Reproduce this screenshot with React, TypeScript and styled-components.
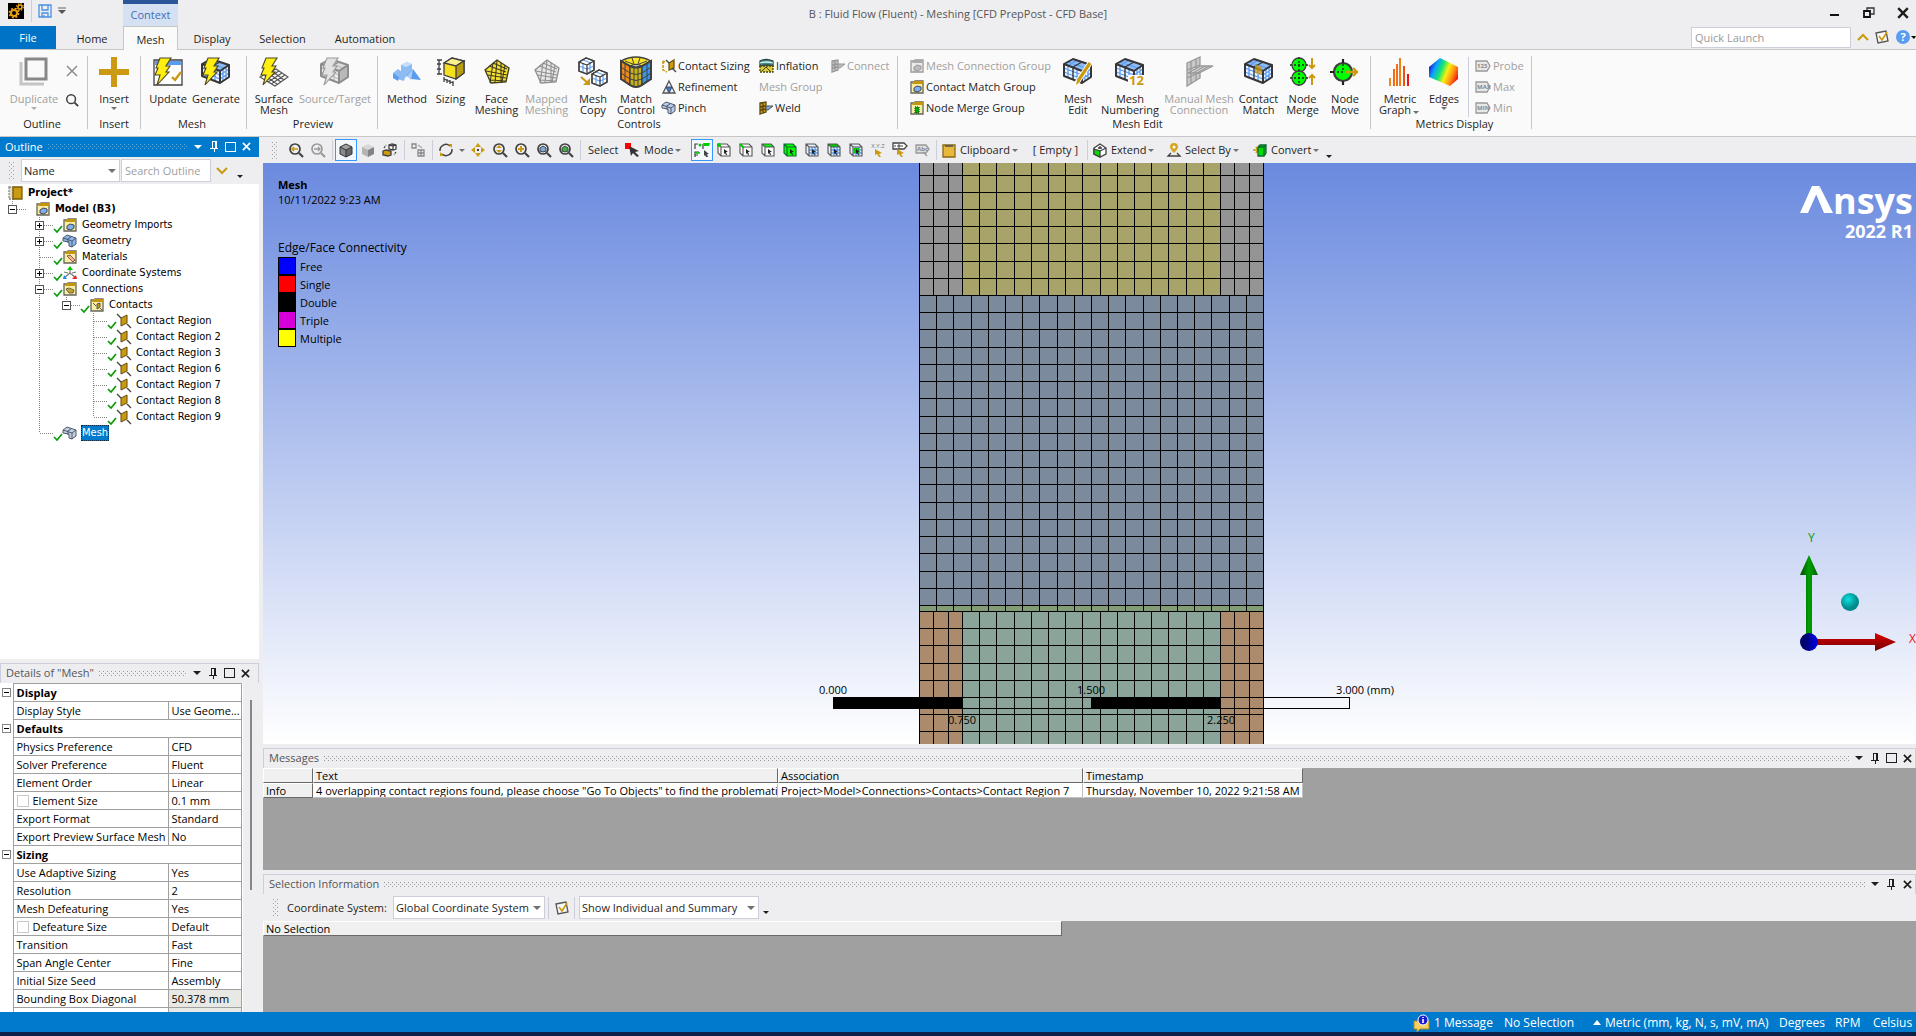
import React from 'react';
import styled, { createGlobalStyle, css } from 'styled-components';

/* ---------- theme values ---------- */
const UI = `"Open Sans", "Noto Sans", sans-serif`;
const TREE = `"DejaVu Sans Condensed", "DejaVu Sans", sans-serif`;
const BLUE = '#007acc';
const CHROME = '#eeeef0';
const GOLD = '#cc9a10';
const INK = '#404040';

const dots = (color: string) =>
  `url("data:image/svg+xml,%3Csvg xmlns='http://www.w3.org/2000/svg' width='4' height='4' shape-rendering='crispEdges'%3E%3Cpath fill='%23${color}' d='M0 0h1v1h-1zM2 2h1v1h-1z'/%3E%3C/svg%3E")`;
const arrow =
  `url("data:image/svg+xml,%3Csvg xmlns='http://www.w3.org/2000/svg' width='8' height='4'%3E%3Cpath fill='%23707070' d='M0 0h8l-4 4z'/%3E%3C/svg%3E")`;

const Global = createGlobalStyle`
  * { box-sizing: border-box; }
  body { margin: 0; background: ${CHROME}; overflow: hidden; }
  button, input, select { font: inherit; color: inherit; margin: 0; padding: 0; border: 0; background: none; }
  svg { display: block; flex: none; overflow: visible; }
`;

/* ---------- shell ---------- */
const Page = styled.div`
  height: 100vh;
  display: flex;
  flex-direction: column;
  background: ${CHROME};
  color: #1e1e1e;
  font: 11px/14px ${UI};
`;
const TitleBar = styled.header`
  height: 26px;
  display: grid;
  grid-template-columns: 1fr auto 1fr;
  align-items: stretch;
  flex: none;
`;
const TitleLeft = styled.div`
  display: flex;
  align-items: flex-start;
`;
const QuickAccess = styled.div`
  display: flex;
  align-items: center;
  width: 123px;
  height: 22px;
  padding-left: 8px;
`;
const PlainButton = styled.button`
  display: flex;
  align-items: center;
  justify-content: center;
`;
const QuickRule = styled.span`
  width: 1px;
  height: 22px;
  margin: 0 6px 0 7px;
  background: #cccedb;
`;
const ContextTab = styled.div`
  width: 55px;
  height: 26px;
  padding-top: 4px;
  border-top: 4px solid #2b579a;
  background: #d5e1f2;
  color: #3f6db5;
  text-align: center;
`;
const WindowTitle = styled.h1`
  margin: 0;
  padding-top: 6px;
  color: #555;
  font: 11px/15px ${UI};
`;
const WindowButtons = styled.div`
  display: flex;
  justify-content: flex-end;
  align-items: center;
  gap: 22px;
  padding-right: 7px;
`;
const TabRow = styled.nav`
  height: 24px;
  display: flex;
  flex: none;
  border-bottom: 1px solid #c6c6c6;
`;
const Tab = styled.button<{ $w: number; $kind?: 'file' | 'on' }>`
  width: ${(p) => p.$w}px;
  height: 23px;
  padding-top: 2px;
  text-align: center;
  ${(p) => p.$kind === 'file' && css`background: #0173c7; color: #fff; margin-right: 5px; padding-top: 0;`}
  ${(p) =>
    p.$kind === 'on' &&
    css`height: 24px; background: #fafafa; border: 1px solid #c6c6c6; border-bottom: 0;`}
`;
const Launch = styled.div`
  margin-left: auto;
  display: flex;
  align-items: center;
  gap: 7px;
  padding: 0 0 1px;
`;
const LaunchInput = styled.input`
  width: 160px;
  height: 21px;
  padding: 0 3px;
  border: 1px solid #cccedb;
  background: #fff;
  &::placeholder { color: #999; opacity: 1; }
`;
const HelpButton = styled(PlainButton)`
  gap: 1px;
`;

/* ---------- ribbon ---------- */
const Ribbon = styled.section`
  height: 87px;
  display: flex;
  flex: none;
  padding-top: 6px;
  background: #fafafa;
  border-bottom: 1px solid #c6c6c6;
`;
const Group = styled.div<{ $pl: number; $pr: number }>`
  height: 73px;
  display: flex;
  flex-direction: column;
  padding: 0 ${(p) => p.$pr}px 0 ${(p) => p.$pl}px;
  border-right: 1px solid #c6c6c6;
  line-height: 13px;
  text-align: center;
`;
const GroupBody = styled.div`
  height: 61px;
  flex: none;
  padding-top: 1px;
  display: flex;
`;
const Big = styled.button<{ $w: number }>`
  width: ${(p) => p.$w}px;
  display: flex;
  flex-direction: column;
  align-items: center;
  line-height: 11px;
  &:disabled { color: #a0a0a0; }
  svg { margin-bottom: 6px; }
  svg + span { white-space: pre; }
`;
const CaretDown = styled.i<{ $c?: string; $m?: number }>`
  display: inline-block;
  border: 3px solid transparent;
  border-top-color: ${(p) => p.$c || '#707070'};
  border-bottom: 0;
  margin: ${(p) => p.$m || 0}px 2px 0;
`;
const SmallCol = styled.div<{ $w: number; $pad?: number }>`
  width: ${(p) => p.$w}px;
  padding-left: ${(p) => p.$pad || 0}px;
  display: flex;
  flex-direction: column;
`;
const Small = styled.button`
  height: 21px;
  flex: none;
  display: flex;
  align-items: center;
  gap: 2px;
  white-space: nowrap;
  padding-bottom: 4px;
  &:disabled { color: #a0a0a0; }
`;
const SideTools = styled.div`
  width: 16px;
  display: flex;
  flex-direction: column;
  align-items: center;
  gap: 16px;
  padding-top: 8px;
`;
const InnerRule = styled.span`
  width: 1px;
  margin: 0 6px 0 2px;
  background: #cccedb;
`;

/* ---------- docked panels ---------- */
const Main = styled.main`
  flex: 1;
  min-height: 0;
  display: flex;
  gap: 4px;
`;
const Left = styled.aside`
  width: 259px;
  flex: none;
  display: flex;
  flex-direction: column;
  gap: 4px;
`;
const Right = styled.section`
  flex: 1;
  min-width: 0;
  display: flex;
  flex-direction: column;
`;
const Panel = styled.section<{ $h?: number }>`
  ${(p) => (p.$h ? css`height: ${p.$h}px; flex: none;` : css`flex: 1; min-height: 0;`)}
  display: flex;
  flex-direction: column;
  overflow: hidden;
`;
const Head = styled.header<{ $active?: boolean; $pr: number }>`
  height: 20px;
  flex: none;
  display: flex;
  align-items: center;
  padding: 0 ${(p) => p.$pr}px 1px 5px;
  color: ${(p) => (p.$active ? '#fff' : '#555')};
  background: ${(p) => (p.$active ? BLUE : CHROME)};
  border: ${(p) => (p.$active ? '0' : '1px solid #cccedb')};
  border-bottom: 0;
`;
const HeadTitle = styled.h2`
  margin: 0;
  font: 11px/16px ${UI};
`;
const HeadDots = styled.span<{ $active?: boolean }>`
  flex: 1;
  height: 5px;
  margin: 0 3px 0 5px;
  background: ${(p) => dots(p.$active ? '66aee0' : '999999')};
`;
const HeadButtons = styled.div<{ $dark?: boolean }>`
  display: flex;
  align-items: center;
  gap: 2px;
  color: ${(p) => (p.$dark ? '#1e1e1e' : '#fff')};
  button { width: 14px; height: 14px; }
`;
const Bar = styled.div<{ $h: number }>`
  height: ${(p) => p.$h}px;
  flex: none;
  display: flex;
  align-items: center;
`;
const Grip = styled.span`
  width: 5px;
  height: 17px;
  margin: 0 8px 0 9px;
  background: ${dots('a0a0a8')};
`;
const Field = styled.input`
  width: 90px;
  height: 23px;
  padding: 0 3px;
  border: 1px solid #cccedb;
  background: #fff;
  &::placeholder { color: #a0a0a0; opacity: 1; }
`;
const Drop = styled.select<{ $w: number }>`
  appearance: none;
  width: ${(p) => p.$w}px;
  height: 23px;
  padding: 0 14px 0 2px;
  border: 1px solid #cccedb;
  background: #fff ${arrow} no-repeat right 3px center;
  overflow: hidden;
`;
const Overflow = styled.button`
  align-self: flex-end;
  padding: 0 0 5px 2px;
  line-height: 4px;
`;
const OutlineBar = styled(Bar)`
  gap: 1px;
  padding-left: 1px;
  ${Grip} { margin: 0 6px 0 8px; }
  ${Overflow} { padding: 0 0 6px; }
`;

/* ---------- tree ---------- */
const Tree = styled.div`
  flex: 1;
  padding-top: 1px;
  background: #fff;
  font: 11px/16px ${TREE};
  color: #000;
`;
const Node = styled.div<{ $bold?: boolean }>`
  height: 16px;
  display: flex;
  align-items: center;
  font-weight: ${(p) => (p.$bold ? 700 : 400)};
`;
const CheckSlot = styled.span`
  width: 9px;
  padding-top: 7px;
`;
const NodeText = styled.span<{ $sel?: boolean }>`
  margin-left: 4px;
  padding: 0 1px;
  line-height: 16px;
  ${(p) => p.$sel && css`background: ${BLUE}; color: #fff; outline: 1px dotted #0a2a50; outline-offset: -1px;`}
`;

/* ---------- details ---------- */
const DetailsBody = styled.div`
  flex: 1;
  min-height: 0;
  display: flex;
  overflow: hidden;
`;
const Scroll = styled.div`
  flex: 1;
  padding-top: 17px;
  display: flex;
  align-items: flex-start;
  &::after { content: ''; width: 2px; height: 190px; margin-left: 7px; background: #868686; }
`;
const DetailsTable = styled.table`
  width: 243px;
  flex: none;
  align-self: flex-start;
  table-layout: fixed;
  border-collapse: collapse;
  background: #fff;
  color: #000;
  tr { height: 18px; }
  td, th {
    height: 18px;
    padding: 0 0 1px 3px;
    border: 1px solid #a0a0a0;
    line-height: 15px;
    text-align: left;
    white-space: nowrap;
    overflow: hidden;
    text-overflow: ellipsis;
  }
  td:first-child { border-width: 0; padding: 0 0 0 2px; }
`;
const Value = styled.td<{ $ro?: boolean }>`
  background: ${(p) => (p.$ro ? '#e8e8e4' : '#fff')};
`;
const Toggle = styled.button`
  width: 9px;
  height: 9px;
  display: block;
  border: 1px solid #848484;
  background: #fff linear-gradient(#000, #000) no-repeat center / 5px 1px;
`;
const Tick = styled.input`
  appearance: none;
  width: 12px;
  height: 12px;
  margin: 0 4px 0 0;
  border: 1px solid #c8c8c8;
  background: #fff;
  vertical-align: -2px;
`;

/* ---------- graphics toolbar ---------- */
const Tool = styled.button<{ $on?: boolean }>`
  width: 22px;
  height: 22px;
  flex: none;
  display: flex;
  align-items: center;
  justify-content: center;
  ${(p) => p.$on && css`border: 1px solid #3399ff; background: #f4f8fd;`}
`;
const ToolRule = styled.span`
  width: 1px;
  height: 20px;
  flex: none;
  margin: 0 2px 0 3px;
  background: #cccedb;
`;
const TextTool = styled.button<{ $w: number }>`
  width: ${(p) => p.$w}px;
  height: 22px;
  flex: none;
  display: flex;
  align-items: center;
  white-space: nowrap;
  svg { margin: 0 4px 0 3px; }
`;
const ToolLabel = styled.span`
  width: 39px;
  padding-left: 5px;
`;

/* ---------- viewport ---------- */
const Viewport = styled.div`
  flex: 1;
  min-height: 0;
  position: relative;
  overflow: hidden;
  background: linear-gradient(#6a8adf, #fff);
  color: #000;
`;
const Scene = styled.svg`
  position: absolute;
  inset: 0;
  width: 100%;
  height: 100%;
`;
const Legend = styled.div`
  position: absolute;
  left: 15px;
  top: 14px;
  line-height: 15px;
`;
const LegendTitle = styled.div`
  margin: 33px 0 2px;
  font-size: 12px;
`;
const LegendRow = styled.div<{ $c: string }>`
  height: 18px;
  display: flex;
  align-items: center;
  gap: 4px;
  &::before { content: ''; width: 16px; height: 16px; border: 1px solid #000; background: ${(p) => p.$c}; }
`;
const Brand = styled.div`
  position: absolute;
  right: 3px;
  top: 20px;
  color: #fff;
  text-align: right;
`;
const BrandName = styled.div`
  display: flex;
  align-items: flex-start;
  font: 700 36px/36px ${UI};
  svg { margin: 3px 0 0; }
`;
const BrandRelease = styled.div`
  font: 700 18px/24px ${UI};
`;
const Triad = styled.svg`
  position: absolute;
  right: 0;
  bottom: 79px;
`;

/* ---------- bottom tables ---------- */
const Grey = styled.div`
  flex: 1;
  background: #a0a0a0;
`;
const GridArea = styled.div`
  flex: none;
  display: flex;
  background: #a0a0a0;
`;
const Grid = styled.table<{ $w: number }>`
  width: ${(p) => p.$w}px;
  flex: none;
  table-layout: fixed;
  border-collapse: separate;
  border-spacing: 0;
  color: #000;
  td, th {
    height: 15px;
    padding: 0 2px;
    border: 1px solid;
    border-color: #fff #696969 #696969 #fff;
    background: #f0f0f0;
    font-weight: 400;
    line-height: 13px;
    text-align: left;
    white-space: nowrap;
    overflow: hidden;
  }
  td { background: #fff; border-color: #fff #c0c0c0 #c0c0c0 #fff; }
`;
const SelBar = styled(Bar)`
  ${Grip} { margin: 0 9px 0 10px; }
  label { width: 106px; }
  ${Overflow} { padding-bottom: 7px; }
`;
const SelTool = styled(PlainButton)`
  width: 27px;
  height: 22px;
  border: solid #cccedb;
  border-width: 0 1px;
  margin: 0 4px 0 3px;
`;

/* ---------- status ---------- */
const Status = styled.footer`
  height: 20px;
  flex: none;
  display: flex;
  align-items: center;
  justify-content: flex-end;
  gap: 10px;
  padding: 1px 4px 0 0;
  background: ${BLUE};
  color: #fff;
  font-size: 12px;
`;
const StatusItem = styled.button<{ $w: number }>`
  width: ${(p) => p.$w}px;
  display: flex;
  align-items: center;
  gap: 4px;
  white-space: nowrap;
`;
const TaskEdge = styled.div`
  height: 4px;
  flex: none;
  background: #0c2148;
`;

/* ---------- drawings ---------- */
type K = { children?: React.ReactNode; w?: number; h?: number; vb?: string };
const Ico = ({ children, w = 16, h = 16, vb }: K) => (
  <svg width={w} height={h} viewBox={vb || `0 0 ${w} ${h}`} fill="none" stroke={INK} strokeWidth="1.3" aria-hidden="true">
    {children}
  </svg>
);
const Bolt = ({ grey }: { grey?: boolean }) => (
  <path d="M7 1h11l-5 8h4l-4 6h3L4 28l3-10H2l3-7H3z" fill={grey ? '#e2e2e2' : '#ffee10'} stroke={grey ? '#9a9a9a' : '#4a4628'} strokeWidth="1.1" />
);
const BoxMesh = ({ grey }: { grey?: boolean }) => {
  const s = grey ? '#8c8c8c' : '#35353a';
  const b = grey ? '#b8b8b8' : '#5a9cf0';
  return (
    <g strokeLinejoin="round">
      <path d="M1 7l9-5 18 6v12l-9 6L1 19z" fill={grey ? '#eee' : '#eef5ff'} stroke="none" />
      <path d="M1 7l9-5 18 6-9 6z" fill={grey ? '#ddd' : '#8dbcf5'} stroke="none" />
      {grey && <path d="M19 14l9-6v12l-9 6z" fill="#bbb" stroke="none" />}
      <path d="M1 11l18 7 9-6M1 15l18 7 9-6M5 9v11M14 12v11M22 12v12M25 10v12M5 5l18 6M14 3l-9 6" stroke={b} strokeWidth="1.3" />
      <path d="M10 10v12" stroke={s} strokeWidth="1.4" />
      <path d="M10 10l9-5" stroke={s} strokeWidth="1.4" />
      <path d="M1 7l9-5 18 6v12l-9 6L1 19zM1 7l18 7 9-6M19 14v12" stroke={s} strokeWidth="2" />
    </g>
  );
};
const Pent = ({ grey }: { grey?: boolean }) => {
  const s = grey ? '#8f8f8f' : '#3f3c20';
  return (
    <Ico w={30} h={30}>
      <path d="M15 3l12 8-3 14-15 1L3 13z" fill={grey ? '#e6e6e6' : '#f5e132'} stroke={s} />
      <path d="M11 6l-3 20M15 3l-2 23M19 6v20M23 8l-3 17M7 9l17 6M4 14l21 4M6 18l18 3M8 23l16 1M11 6l14 6" stroke={s} strokeWidth="1.1" />
    </Ico>
  );
};
const SmallCube = ({ x, y }: { x: number; y: number }) => (
  <g transform={`translate(${x} ${y})`}>
    <path d="M0 4l7-4 8 3v9l-7 4-8-3z" fill="#fff" />
    <path d="M0 8l8 3 7-3M4 5v9M11 5v9M4 2l8 3" stroke="#6aa6f0" />
    <path d="M0 4l7-4 8 3v9l-7 4-8-3zM0 4l8 3 7-4M8 7v9" />
  </g>
);
const Duplicate = () => (
  <Ico w={30} h={30}>
    <path d="M2 5v22h23" stroke="#c4c4c4" strokeWidth="3" />
    <path d="M7 2h20v20H7z" fill="#fafafa" stroke="#888" strokeWidth="3" />
  </Ico>
);
const Plus = () => (
  <Ico w={30} h={30}><path d="M15 0v30M0 15h30" stroke={GOLD} strokeWidth="6" /></Ico>
);
const Update = () => (
  <Ico w={30} h={30}>
    <path d="M1 3h28v25H1z" fill="#fff" stroke="#404040" />
    <path d="M2 4h26v4H2z" fill="#5a9cf0" stroke="none" />
    <path d="M19 20l3 3 6-8" stroke={GOLD} strokeWidth="2.4" />
    <Bolt />
  </Ico>
);
const Generate = ({ grey }: { grey?: boolean }) => (
  <Ico w={30} h={30}><BoxMesh grey={grey} /><Bolt grey={grey} /></Ico>
);
const SurfaceMesh = () => (
  <Ico w={30} h={30}>
    <path d="M1 20l16-8 12 8-13 9zM5 23l15-9M9 25l14-9M12 27l14-9M5 18l13 9M9 16l13 9M13 14l12 9" stroke="#555" strokeWidth="1.1" />
    <Bolt />
  </Ico>
);
const Method = () => (
  <Ico w={30} h={30}>
    <path d="M1 16l5-4 8 6-2 6-11-3z" fill="#8dbcf5" stroke="none" /><path d="M1 16l6 4-1 4-5-3z" fill="#5a9cf0" stroke="none" />
    <path d="M9 8l6-3 5 2v10l-6 3-5-3z" fill="#8dbcf5" stroke="none" /><path d="M9 8l6-3 5 2-6 3z" fill="#c6dffb" stroke="none" />
    <path d="M21 12l8 11-10-1-4-4z" fill="#5a9cf0" stroke="none" /><path d="M21 12l-6 7 4 4z" fill="#a9cdf8" stroke="none" />
  </Ico>
);
const Sizing = () => (
  <Ico w={30} h={30}>
    <path d="M8 6l8-5 12 3v12l-8 6-12-4z" fill="#f5df20" />
    <path d="M8 6l8-5 12 3-8 5z" fill="#fbf090" /><path d="M20 9l8-5v12l-8 6z" fill="#b89d10" />
    <path d="M3 3v14M1 3h5M1 7h4M1 12h4M1 17h5M8 22l9 4M8 20v5M11 22v4M14 23v4M17 24v5" />
  </Ico>
);
const MeshCopy = () => (
  <Ico w={30} h={30}>
    <SmallCube x={1} y={1} /><SmallCube x={14} y={13} />
    <path d="M3 20l8 7" stroke={GOLD} strokeWidth="2.2" /><path d="M12 21v7H5z" fill={GOLD} stroke="none" />
  </Ico>
);
const MatchControl = () => (
  <Ico w={30} h={30} vb="1 1 30 30">
    <path d="M1 5l9 5v19l-9-6z" fill="#f08a1c" /><path d="M10 10q6 3 12 0v19q-6 4-12 0z" fill="#c9b418" /><path d="M22 10l9-5v18l-9 6z" fill="#3a96e8" />
    <path d="M1 5q15-8 30 0l-9 5q-6-3-12 0z" fill="#f7e428" />
    <path d="M1 11l9 6q6 3 12 0l9-6M1 17l9 6q6 3 12 0l9-6M5 8v18M14 10v20M18 10v20M27 8v18M5 5l8 3M27 5l-8 3M12 2l2 6M20 2l-2 6" strokeWidth="1" />
    <path d="M1 5v18l9 6q6 4 12 0l9-6V5l-9 5q-6 3-12 0z" strokeWidth="2" />
  </Ico>
);
const MeshEdit = () => (
  <Ico w={30} h={30}>
    <BoxMesh /><path d="M27 6L15 24l-2 4" stroke="#fff" strokeWidth="5" /><path d="M27 6L15 24" stroke={GOLD} strokeWidth="3.2" /><path d="M14 23l-1 5 4-3z" fill={GOLD} stroke="none" />
  </Ico>
);
const MeshNumbering = () => (
  <Ico w={30} h={30}>
    <BoxMesh /><path d="M13 18h17v11H13z" fill="#fafafa" stroke="none" />
    <text x="14" y="28" fontFamily={UI} fontWeight="700" fontSize="13" fill={GOLD} stroke="none">12</text>
  </Ico>
);
const ManualMesh = () => (
  <Ico w={30} h={30}>
    <path d="M3 6l13-6v21L3 29z" fill="#c8c8c8" stroke="#999" /><path d="M7 4v22M12 2v22M3 13l13-5M3 21l13-6" stroke="#999" />
    <path d="M4 16h11l14-7H17z" fill="#ddd" stroke="#999" /><path d="M9 16l12-7M13 16l12-7" stroke="#999" />
  </Ico>
);
const ContactMatch = () => (
  <Ico w={30} h={30}><BoxMesh /><path d="M11 7l7 3v8l-7-2z" fill={GOLD} fillOpacity=".75" stroke="none" /></Ico>
);
const NodeMerge = () => (
  <Ico w={30} h={30}>
    <circle cx="11" cy="8" r="7" fill="#0f0" /><circle cx="11" cy="21" r="7" fill="#0f0" />
    <path d="M11 0v29M2 8h18M2 21h18" strokeDasharray="2 2" stroke="#222" />
    <path d="M24 1v10M21 8l3 3 3-3M24 28V18M21 21l3-3 3 3" stroke={GOLD} strokeWidth="2" />
  </Ico>
);
const NodeMove = () => (
  <Ico w={30} h={30}>
    <circle cx="13" cy="15" r="9" fill="#0f0" strokeWidth="2.2" /><path d="M13 2v4M13 24v4M0 15h4" strokeWidth="2.2" stroke="#222" />
    <path d="M13 7v8H5" strokeDasharray="2 2" stroke="#222" /><path d="M16 15h10M23 11l4 4-4 4" stroke={GOLD} strokeWidth="2.4" />
  </Ico>
);
const MetricGraph = () => (
  <Ico w={30} h={30}>
    {[[5, 21, '#f08a20'], [9, 12, '#f06a18'], [12, 7, '#f07018'], [15, 1, '#f08010'], [19, 9, '#f05018'], [23, 17, '#e81414']].map(([x, y, c]) => (
      <path key={x} d={`M${x} ${y}V29`} stroke={c as string} strokeWidth="2" />
    ))}
  </Ico>
);
const Edges = () => (
  <Ico w={30} h={30}>
    <defs><linearGradient id="rainbow" x1="0" y1=".3" x2="1" y2=".7">
      {['#1616d8', '#10a0ff', '#10e870', '#f8f010', '#ff9010', '#f01010'].map((c, i) => <stop key={c} offset={i / 5} stopColor={c} />)}
    </linearGradient></defs>
    <path d="M0 10l11-9 18 9v12l-8 7L0 20z" fill="url(#rainbow)" stroke="none" />
  </Ico>
);
const FolderIco = ({ grey, kind = 'box' }: { grey?: boolean; kind?: string }) => (
  <Ico w={14} h={14}>
    <path d="M1 2h3l1-1h8v12H1z" fill={grey ? '#ececec' : '#f8efa4'} stroke={grey ? '#999' : '#66665c'} />
    <path d="M4 1h9v3H2z" fill={grey ? '#aaa' : '#c4960e'} stroke="none" />
    {kind === 'box' && <path d="M4 8l3-2 4 1v3l-3 2-4-1z" fill={grey ? '#bbb' : '#7fb0f0'} stroke={grey ? '#999' : '#445'} strokeWidth="1" />}
    {kind === 'green' && <path d="M5 6h4v6H5z" fill="#0a0" stroke="#252" strokeDasharray="1 1" />}
    {kind === 'mat' && <path d="M4 6l3-1 5 5-2 2z" fill="#f3b890" stroke="#855" strokeWidth="1" />}
    {kind === 'link' && <path d="M3 7l3-1 5 2-1 3-4 0z" fill="#c9a22c" stroke="#665" strokeWidth="1" />}
    {kind === 'contact' && <path d="M3 5l3 3M7 6v5l3-2V5zM10 10l2 2" fill={GOLD} stroke="#555" strokeWidth="1" />}
  </Ico>
);
const ContactIco = () => (
  <Ico w={14} h={14}><path d="M0 0l4 4M10 10l4 4" /><path d="M4 4l6-3v8l-6 3z" fill={GOLD} stroke="#5e4c10" strokeWidth="1" /></Ico>
);
const GeomIco = ({ c = '#8ab6f0' }: { c?: string }) => (
  <Ico w={14} h={14}>
    <path d="M0 4l4-3 9 3v6l-4 3-3-1V8L0 7z" fill={c} stroke="#50586a" strokeWidth="1" /><path d="M0 4l9 3 4-3M9 7v6M4 5.500l4-2.500M5 6v3" stroke="#50586a" strokeWidth="1" />
  </Ico>
);
const AxesIco = () => (
  <Ico w={14} h={14}>
    <path d="M7 7V1M7 7L1 12M7 7l6 5M1 6l4 1M13 6L9 7" strokeWidth="1.200" stroke="#777" />
    <path d="M4 4l3-4 3 4z" fill="#0c0" stroke="none" /><path d="M14 13l-5 0 4-4z" fill="#e22" stroke="none" /><path d="M0 13l4 0-3-4z" fill="#28e" stroke="none" />
  </Ico>
);
const ProjectIco = () => (
  <Ico w={14} h={14}><path d="M0 1h4v12H0z" fill="#e4e0c8" stroke="#888" strokeDasharray="2 1" /><path d="M4 1h9v12H4z" fill={GOLD} stroke="#7a5c08" /></Ico>
);
const GreenCheck = () => (
  <Ico w={8} h={8}><path d="M0 4l3 3 5-6" stroke="#0a9a0a" strokeWidth="1.700" /></Ico>
);
const Plate = ({ grey }: { grey?: boolean }) => (
  <Ico w={14} h={14}>
    <path d="M1 2l6-1v10l-6 2zM4 1v11M1 6l6-1M1 9l6-1" fill={grey ? '#c4c4c4' : GOLD} stroke={grey ? '#999' : '#5c4a10'} />
    <path d="M7 5h7l-5 4H7z" fill={grey ? '#bbb' : '#7fa8d8'} stroke={grey ? '#999' : '#555'} strokeWidth="1" />
  </Ico>
);
const ContactSizing = () => (
  <Ico w={14} h={14}><path d="M1 2v9l4 2M1 2l2 1" stroke={GOLD} strokeDasharray="3 1" strokeWidth="1.600" /><path d="M7 4l5-3v8l-5 2z" fill={GOLD} stroke="#6a5410" /><path d="M4 1l3 3M10 9l4 4" /></Ico>
);
const Refinement = () => (
  <Ico w={14} h={14}><path d="M7 1l6 12H1z" fill="#e8f1fc" stroke="#555" /><path d="M4 7h6l-3 6z" fill="#3c78d0" stroke="#445" strokeWidth="1" /></Ico>
);
const Inflation = () => (
  <Ico w={15} h={14}>
    <path d="M1 2q6-3 13 0v5q-6-2-13 0z" fill="#3e8f8c" stroke="#2a4646" /><path d="M1 4q6-2 13 0" stroke="#d8f0e8" />
    <path d="M1 7h13v6H1z" fill="#d9c838" stroke="#4c4618" strokeDasharray="2 1" /><path d="M3 12l4-4 4 4" stroke="#4c4618" strokeWidth="1" />
  </Ico>
);
const Tag = ({ t }: { t: string }) => (
  <Ico w={16} h={12}>
    <path d="M1 1h11l3 5-3 5H1z" fill="#e8e8e8" stroke="#999" /><text x="2" y="8" fontFamily={UI} fontSize="6" fontWeight="700" fill="#888" stroke="none">{t}</text>
  </Ico>
);
const Lens = ({ c = INK, children, s = 16 }: { c?: string; children?: React.ReactNode; s?: number }) => (
  <Ico w={s} h={s} vb="0 0 16 16"><circle cx="7" cy="7" r="5" stroke={c} strokeWidth="1.700" /><path d="M11 11l4 4" stroke={c} strokeWidth="2.200" />{children}</Ico>
);
const SolidCube = ({ line }: { line?: boolean }) => (
  <Ico w={14} h={14}>
    <path d="M1 4l6-3 6 3-6 3z" fill={line ? '#a0a0a0' : '#d8d8d8'} stroke="none" /><path d="M1 4l6 3v7l-6-3z" fill={line ? '#8a8a8a' : '#b4b4b4'} stroke="none" /><path d="M13 4L7 7v7l6-3z" fill={line ? '#686868' : '#848484'} stroke="none" />
    {line && <path d="M1 4l6-3 6 3v7l-6 3-6-3zM1 4l6 3 6-3M7 7v7" stroke="#333" strokeWidth="1" />}
  </Ico>
);
const PickCube = ({ mode }: { mode: string }) => {
  const all = mode === 'body';
  const blue = mode.startsWith('m');
  return (
    <Ico w={14} h={14}>
      <path d="M1 1h9l3 3v9H4l-3-3z" fill={all ? '#0f0' : blue ? '#e6f0fc' : '#fafafa'} stroke="none" />
      {mode === 'face' && <path d="M1 1h9l3 3H4z" fill="#0f0" stroke="none" />}
      {mode === 'mface' && <path d="M1 1h9l3 3H4z" fill="#0c0" stroke="none" />}
      {blue && <path d="M4 7h9M4 10h9M7 4v9M10 4v9" stroke="#5a9cf0" />}
      {mode === 'mbody' && <path d="M5 5h5v5H5z" fill="#0c0" stroke="none" />}
      <path d="M1 1h9l3 3v9H4l-3-3zM1 1l3 3h9M4 4v9" stroke={all ? '#163' : '#555'} strokeWidth="1.1" />
      {mode === 'vertex' && <circle cx="2" cy="2" r="2" fill="#0c0" stroke="none" />}
      {mode === 'edge' && <path d="M1 1l4 4" stroke="#0c0" strokeWidth="2" />}
      <path d="M7 6l4 3-2 0 1 3-1 0-1-2-1 1z" fill="#222" stroke="none" />
    </Ico>
  );
};
const CheckBoxIco = () => (
  <Ico w={14} h={14}><path d="M1 3l10-2 2 10-10 2z" fill="#f8f8f8" stroke="#555" /><path d="M4 6l3 4 5-8" stroke={GOLD} strokeWidth="1.6" /></Ico>
);
const X = ({ s = 10, w = 1.8 }: { s?: number; w?: number }) => (
  <svg width={s} height={s} viewBox="0 0 10 10" stroke="currentColor" strokeWidth={w} aria-hidden="true"><path d="M1 1l8 8M9 1L1 9" /></svg>
);

/* tree connector cells: pass, tee, end, blank, with an optional expander */
const Cell = ({ kind }: { kind: string }) => (
  <svg width="27" height="16" shapeRendering="crispEdges" aria-hidden="true">
    {kind[0] !== ' ' && (
      <g fill="none" stroke="#808080" strokeDasharray="1 1">
        <path d={kind[0] === 'l' ? 'M12.500 0v8' : 'M12.500 0v16'} />
        {kind[0] !== 'v' && <path d="M13 8.500h14" />}
      </g>
    )}
    {kind[1] && (
      <g fill="none" stroke="#555">
        <path d="M8.500 4.500h8v8h-8z" fill="#fff" />
        <path stroke="#000" d={kind[1] === '+' ? 'M10 8.500h5M12.500 6v5' : 'M10 8.500h5'} />
      </g>
    )}
  </svg>
);

const nodes: [string[], React.ReactNode, string][] = [
  [[], <ProjectIco />, 'Project*'],
  [['l-'], <FolderIco />, 'Model (B3)'],
  [[' ', 't+'], <FolderIco />, 'Geometry Imports'],
  [[' ', 't+'], <GeomIco />, 'Geometry'],
  [[' ', 't'], <FolderIco kind="mat" />, 'Materials'],
  [[' ', 't+'], <AxesIco />, 'Coordinate Systems'],
  [[' ', 't-'], <FolderIco kind="link" />, 'Connections'],
  [[' ', 'v', 'l-'], <FolderIco kind="contact" />, 'Contacts'],
  ...['', ' 2', ' 3', ' 6', ' 7', ' 8', ' 9'].map(
    (n): [string[], React.ReactNode, string] => [[' ', 'v', ' ', n === ' 9' ? 'l' : 't'], <ContactIco />, 'Contact Region' + n],
  ),
  [[' ', 'l'], <GeomIco c="#c2d0e4" />, 'Mesh'],
];

const details: [string, string?, string?][] = [
  ['Display'],
  ['Display Style', 'Use Geome...'],
  ['Defaults'],
  ['Physics Preference', 'CFD'],
  ['Solver Preference', 'Fluent'],
  ['Element Order', 'Linear'],
  ['Element Size', '0.1 mm', 'tick'],
  ['Export Format', 'Standard'],
  ['Export Preview Surface Mesh', 'No'],
  ['Sizing'],
  ['Use Adaptive Sizing', 'Yes'],
  ['Resolution', '2'],
  ['Mesh Defeaturing', 'Yes'],
  ['Defeature Size', 'Default', 'tick'],
  ['Transition', 'Fast'],
  ['Span Angle Center', 'Fine'],
  ['Initial Size Seed', 'Assembly'],
  ['Bounding Box Diagonal', '50.378 mm', 'ro'],
  ['', '', 'ro'],
];

const PanelHead = ({ title, active, max = true, edge = 6 }: { title: string; active?: boolean; max?: boolean; edge?: number }) => (
  <Head $active={active} $pr={edge}>
    <HeadTitle>{title}</HeadTitle>
    <HeadDots $active={active} />
    <HeadButtons $dark={!active}>
      <PlainButton aria-label="Window position"><svg width="8" height="4"><path d="M0 0h8l-4 4z" fill="currentColor" /></svg></PlainButton>
      <PlainButton aria-label="Pin">
        <svg width="8" height="11" fill="none" stroke="currentColor" shapeRendering="crispEdges"><path d="M2.500 7V.5h4V7M5.500 1v6M0 7.500h8M4.500 8v3" /></svg>
      </PlainButton>
      {max && (
        <PlainButton aria-label="Maximize">
          <svg width="11" height="10" fill="none" stroke="currentColor" shapeRendering="crispEdges"><path d="M.5.5h10v9H.5z" /></svg>
        </PlainButton>
      )}
      <PlainButton aria-label="Close"><X s={9} /></PlainButton>
    </HeadButtons>
  </Head>
);

/* mesh colours and grid, one band per body */
const L = 656, R = 1000, C1 = 699, C2 = 957, PITCH = 17.2;
const steps = (from: number, to: number, n: number) => Array.from({ length: n + 1 }, (_, i) => Math.round(from + ((to - from) * i) / n));
const side = [...steps(L, C1, 3), ...steps(C2, R, 3)];
const core = steps(C1, C2, 15);
const wide = steps(L, R, 20);
const topRows = Array.from({ length: 8 }, (_, i) => Math.round(132 - PITCH * i));
const midRows = steps(132, 442, 18);
const lowRows = Array.from({ length: 8 }, (_, i) => Math.round(448 + PITCH * i));
const vLines = (xs: number[], a: number, b: number) => xs.map((x) => `M${x} ${a}h1v${b - a}h-1z`).join('');
const hLines = (ys: number[]) => ys.map((y) => `M${L} ${y}h${R - L + 1}v1h-${R - L + 1}z`).join('');

const MeshScene = () => (
  <Scene viewBox="0 0 1653 581" preserveAspectRatio="xMidYMax slice" shapeRendering="crispEdges">
    <path d={`M${L} 0H${R}V132H${L}z`} fill="#949494" />
    <path d={`M${C1} 0H${C2}V132H${C1}z`} fill="#a8a368" />
    <path d={`M${L} 132H${R}V442H${L}z`} fill="#7b8a9d" />
    <path d={`M${L} 442H${R}V448H${L}z`} fill="#829c75" />
    <path d={`M${L} 448H${R}V581H${L}z`} fill="#ab8b6c" />
    <path d={`M${C1} 448H${C2}V581H${C1}z`} fill="#8aa49a" />
    <path d={vLines([...side, ...core], 0, 132) + vLines(wide, 132, 448) + vLines([...side, ...core], 448, 581) + hLines([...topRows, ...midRows, ...lowRows])} />
    <path d="M570 534h129v12H570zM828 534h130v12H828z" />
    <path d="M570.500 534.500h516v11h-516z" fill="none" stroke="#000" />
    <g fontFamily={UI} fontSize="11" textAnchor="middle">
      <text x="570" y="531">0.000</text>
      <text x="828" y="531">1.500</text>
      <text x="1102" y="531">3.000 (mm)</text>
      <text x="699" y="561">0.750</text>
      <text x="958" y="561">2.250</text>
    </g>
  </Scene>
);

export default function App() {
  return (
    <Page>
      <Global />
      <TitleBar>
        <TitleLeft>
          <QuickAccess>
            <Ico>
              <path d="M0 0h16v16H0z" fill="#000" stroke="none" />
              <circle cx="6" cy="10" r="3" stroke="#e8a010" strokeWidth="2" /><circle cx="6" cy="10" r="4.600" stroke="#e8a010" strokeDasharray="2 1.600" strokeWidth="1.600" />
              <circle cx="12" cy="4" r="2" stroke="#e8a010" strokeWidth="1.500" /><circle cx="12" cy="4" r="3.300" stroke="#e8a010" strokeDasharray="1.400 1.200" />
            </Ico>
            <QuickRule />
            <PlainButton aria-label="Save">
              <Ico w={14} h={14}><path d="M1 1h12v12H1zM4 1v5h6V1M4 13V9h6v4M6 13v-2" stroke="#4a90e2" /></Ico>
            </PlainButton>
            <PlainButton aria-label="Customize">
              <Ico w={20} h={8}><path d="M6 1h8" stroke="#666" strokeWidth="1" /><path d="M6 3h8l-4 4z" fill="#555" stroke="none" /></Ico>
            </PlainButton>
          </QuickAccess>
          <ContextTab>Context</ContextTab>
        </TitleLeft>
        <WindowTitle>B : Fluid Flow (Fluent) - Meshing [CFD PrepPost - CFD Base]</WindowTitle>
        <WindowButtons>
          <PlainButton aria-label="Minimize"><Ico w={12} h={10}><path d="M1 7h9" stroke="#111" strokeWidth="2" /></Ico></PlainButton>
          <PlainButton aria-label="Restore"><Ico w={12} h={12}><path d="M4 3V1h7v6H8" stroke="#333" /><path d="M1 4h6v6H1z" stroke="#111" strokeWidth="1.800" /></Ico></PlainButton>
          <PlainButton aria-label="Close"><X s={12} w={2} /></PlainButton>
        </WindowButtons>
      </TitleBar>

      <TabRow>
        <Tab $w={56} $kind="file">File</Tab>
        <Tab $w={62}>Home</Tab>
        <Tab $w={55} $kind="on">Mesh</Tab>
        <Tab $w={68}>Display</Tab>
        <Tab $w={73}>Selection</Tab>
        <Tab $w={92}>Automation</Tab>
        <Launch>
          <LaunchInput aria-label="Quick Launch" placeholder="Quick Launch" />
          <PlainButton aria-label="Collapse ribbon"><Ico w={10} h={6}><path d="M0 6l5-5 5 5" stroke={GOLD} strokeWidth="2" /></Ico></PlainButton>
          <PlainButton aria-label="Options"><CheckBoxIco /></PlainButton>
          <HelpButton aria-label="Help">
            <Ico w={14} h={14}><circle cx="7" cy="7" r="7" fill="#5a9cf0" stroke="none" /><text x="7" y="11" textAnchor="middle" fontFamily={UI} fontWeight="700" fontSize="11" fill="#fff" stroke="none">?</text></Ico>
            <svg width="5" height="3"><path d="M0 0h5l-2 3z" /></svg>
          </HelpButton>
        </Launch>
      </TabRow>

      <Ribbon>
        <Group $pl={4} $pr={7}>
          <GroupBody>
            <Big $w={60} disabled><Duplicate /><span>Duplicate</span><CaretDown $c="#b0b0b0" $m={3} /></Big>
            <SideTools>
              <PlainButton aria-label="Delete"><Ico w={12} h={12}><path d="M1 1l10 10M11 1L1 11" stroke="#8c8c8c" strokeWidth="1.500" /></Ico></PlainButton>
              <PlainButton aria-label="Find"><Lens s={14} /></PlainButton>
            </SideTools>
          </GroupBody>
          Outline
        </Group>
        <Group $pl={0} $pr={0}>
          <GroupBody><Big $w={52}><Plus /><span>Insert</span><CaretDown $m={3} /></Big></GroupBody>
          Insert
        </Group>
        <Group $pl={3} $pr={6}>
          <GroupBody>
            <Big $w={48}><Update /><span>Update</span></Big>
            <Big $w={48}><Generate /><span>Generate</span></Big>
          </GroupBody>
          Mesh
        </Group>
        <Group $pl={5} $pr={3}>
          <GroupBody>
            <Big $w={44}><SurfaceMesh /><span>{'Surface\nMesh'}</span></Big>
            <Big $w={78} disabled><Generate grey /><span>Source/Target</span></Big>
          </GroupBody>
          Preview
        </Group>
        <Group $pl={8} $pr={5}>
          <GroupBody>
            <Big $w={42}><Method /><span>Method</span></Big>
            <Big $w={45}><Sizing /><span>Sizing</span></Big>
            <Big $w={47}><Pent /><span>{'Face\nMeshing'}</span></Big>
            <Big $w={53} disabled><Pent grey /><span>{'Mapped\nMeshing'}</span></Big>
            <Big $w={40}><MeshCopy /><span>{'Mesh\nCopy'}</span></Big>
            <Big $w={46}><MatchControl /><span>{'Match\nControl'}</span></Big>
            <SmallCol $w={99} $pad={3}>
              <Small><ContactSizing />Contact Sizing</Small>
              <Small><Refinement />Refinement</Small>
              <Small><GeomIco c="#b8ccec" />Pinch</Small>
            </SmallCol>
            <SmallCol $w={72} $pad={1}>
              <Small><Inflation />Inflation</Small>
              <Small disabled>Mesh Group</Small>
              <Small><Plate />Weld</Small>
            </SmallCol>
            <SmallCol $w={62} $pad={1}>
              <Small disabled><Plate grey />Connect</Small>
            </SmallCol>
          </GroupBody>
          Controls
        </Group>
        <Group $pl={11} $pr={4}>
          <GroupBody>
            <SmallCol $w={149} $pad={1}>
              <Small disabled><FolderIco grey />Mesh Connection Group</Small>
              <Small><FolderIco />Contact Match Group</Small>
              <Small><FolderIco kind="green" />Node Merge Group</Small>
            </SmallCol>
            <Big $w={40}><MeshEdit /><span>{'Mesh\nEdit'}</span></Big>
            <Big $w={64}><MeshNumbering /><span>{'Mesh\nNumbering'}</span></Big>
            <Big $w={74} disabled><ManualMesh /><span>{'Manual Mesh\nConnection'}</span></Big>
            <Big $w={45}><ContactMatch /><span>{'Contact\nMatch'}</span></Big>
            <Big $w={43}><NodeMerge /><span>{'Node\nMerge'}</span></Big>
            <Big $w={42}><NodeMove /><span>{'Node\nMove'}</span></Big>
          </GroupBody>
          Mesh Edit
        </Group>
        <Group $pl={7} $pr={0}>
          <GroupBody>
            <Big $w={44}><MetricGraph /><span>{'Metric\nGraph'}<CaretDown /></span></Big>
            <Big $w={44}><Edges /><span>Edges</span><CaretDown $m={3} /></Big>
            <InnerRule />
            <SmallCol $w={56}>
              <Small disabled><Tag t="123" />Probe</Small>
              <Small disabled><Tag t="MAX" />Max</Small>
              <Small disabled><Tag t="MIN" />Min</Small>
            </SmallCol>
          </GroupBody>
          Metrics Display
        </Group>
      </Ribbon>

      <Main>
        <Left>
          <Panel>
            <PanelHead title="Outline" active />
            <OutlineBar $h={27}>
              <Grip />
              <Drop $w={99} aria-label="Filter by"><option>Name</option></Drop>
              <Field aria-label="Search Outline" placeholder="Search Outline" />
              <PlainButton aria-label="Expand"><Ico w={22} h={8}><path d="M5 1l5 5 5-5" stroke={GOLD} strokeWidth="2" /></Ico></PlainButton>
              <Overflow aria-label="More"><CaretDown $c="#1e1e1e" /></Overflow>
            </OutlineBar>
            <Tree role="tree">
              {nodes.map(([cells, icon, text], i) => (
                <Node key={text} $bold={i < 2} role="treeitem">
                  {cells.map((k, j) => <Cell key={j} kind={k} />)}
                  <CheckSlot>{i > 1 && <GreenCheck />}</CheckSlot>
                  {icon}
                  <NodeText $sel={text === 'Mesh'}>{text}</NodeText>
                </Node>
              ))}
            </Tree>
          </Panel>
          <Panel $h={349}>
            <PanelHead title={'Details of "Mesh"'} />
            <DetailsBody>
              <DetailsTable>
                <colgroup><col width="13" /><col width="155" /><col width="73" /><col width="2" /></colgroup>
                <tbody>
                  {details.map(([name, value, kind], i) => (
                    <tr key={i}>
                      <td>{value === undefined && <Toggle aria-label={'Collapse ' + name} />}</td>
                      {value === undefined ? (
                        <th colSpan={2}>{name}</th>
                      ) : (
                        <>
                          <td>{kind === 'tick' ? <label><Tick type="checkbox" />{name}</label> : name}</td>
                          <Value $ro={kind === 'ro'}>{value}</Value>
                        </>
                      )}
                    </tr>
                  ))}
                </tbody>
              </DetailsTable>
              <Scroll />
            </DetailsBody>
          </Panel>
        </Left>

        <Right>
          <Bar $h={26}>
            <Grip />
            <Tool aria-label="Previous view"><Lens><path d="M4 7h6M6 5L4 7l2 2" stroke={GOLD} strokeWidth="1.600" /></Lens></Tool>
            <Tool aria-label="Next view"><Lens c="#9a9a9a"><path d="M4 7h6M8 5l2 2-2 2" stroke="#9a9a9a" /></Lens></Tool>
            <ToolRule />
            <Tool $on aria-label="Shaded with edges"><SolidCube line /></Tool>
            <Tool aria-label="Shaded"><SolidCube /></Tool>
            <Tool aria-label="Random colors">
              <Ico w={14} h={14}><path d="M6 2l3-1 4 1v4l-3 1-4-1zM6 2l4 1 3-1M10 3v4" fill="#fff" /><path d="M0 8l3-1 5 1v4l-3 1-5-1z" fill={GOLD} /><path d="M1 5l2-3M13 9l-2 3" strokeDasharray="2 1" /></Ico>
            </Tool>
            <ToolRule />
            <Tool aria-label="Viewports">
              <Ico w={14} h={14}><path d="M1 1h4v4H1zM7 7h6v6H7zM10 7v6M7 10h6" stroke="#888" /><path d="M7 2l4 3" stroke="#aaa" /></Ico>
            </Tool>
            <ToolRule />
            <Tool aria-label="Rotate"><Ico w={14} h={14}><path d="M1 8a6 6 0 0 1 10-5M13 6a6 6 0 0 1-10 5" strokeWidth="1.500" /><path d="M9 1h4v4zM1 9v4h4z" fill={GOLD} stroke="none" /></Ico></Tool>
            <CaretDown />
            <Tool aria-label="Pan"><Ico w={14} h={14}><path d="M7 0l3 4H4zM7 14l3-4H4zM0 7l4-3v6zM14 7l-4-3v6z" fill={GOLD} stroke="none" /><path d="M6 6h2v2H6z" fill={INK} stroke="none" /></Ico></Tool>
            <Tool aria-label="Zoom"><Lens><path d="M7 3l3 3H4zM7 11l3-3H4z" fill={GOLD} stroke="none" /></Lens></Tool>
            <Tool aria-label="Box zoom"><Lens><path d="M7 4v6M4 7h6" stroke={GOLD} strokeWidth="2" /></Lens></Tool>
            <Tool aria-label="Zoom to fit"><Lens><path d="M4 6l3-2 3 2v3l-3 1-3-1z" fill="#7fa8e0" strokeWidth="1" /></Lens></Tool>
            <Tool aria-label="Zoom to selection"><Lens><path d="M4 6l3-2 3 2v3l-3 1-3-1z" fill="#3cb040" strokeWidth="1" /></Lens></Tool>
            <ToolRule />
            <ToolLabel>Select</ToolLabel>
            <TextTool $w={69}>
              <Ico w={15} h={14}><path d="M0 0h6v6H0z" fill="#f00" stroke="none" /><path d="M4 3l10 5-4 1 4 4-2 1-4-4-2 3z" fill="#333" stroke="none" /></Ico>
              Mode<CaretDown />
            </TextTool>
            <Tool $on aria-label="Smart select">
              <Ico w={18} h={16}>
                <path d="M2 7V2h3M2 15v-5h4M10 7V2M2 13h3" strokeWidth="1.2" />
                <path d="M10 1h7l-1 3h-5z" fill="#0c0" stroke="none" /><circle cx="7" cy="3" r="1.500" fill="#0c0" stroke="none" /><path d="M3 11h4" stroke="#0c0" strokeWidth="1.6" />
                <path d="M11 8l5 4-2 0 1 3-2 0-1-2-1 1z" fill="#444" stroke="none" />
              </Ico>
            </Tool>
            {['vertex', 'edge', 'face', 'body', 'mnode', 'mface', 'mbody'].map((m) => (
              <Tool key={m} aria-label={'Select ' + m}><PickCube mode={m} /></Tool>
            ))}
            <Tool aria-label="Pick coordinates">
              <Ico><text x="8" y="6" textAnchor="middle" fontFamily={UI} fontSize="6" fill="#777" stroke="none">X.Y.Z</text><path d="M5 7l7 4-3 1 2 3-2 0-2-3-2 1z" fill={GOLD} stroke="none" /></Ico>
            </Tool>
            <Tool aria-label="Probe">
              <Ico><path d="M1 1h11l3 3-3 3H1z" fill="#fff" /><path d="M3 3v2M6 3v2h2V3zM10 3v2" strokeWidth="1" /><path d="M5 7l7 4-3 1 2 3-2 0-2-3-2 1z" fill={GOLD} stroke="none" /></Ico>
            </Tool>
            <Tool aria-label="Label">
              <Ico w={15} h={14}><path d="M1 2h10l3 4-3 4H1z" fill="#ddd" stroke="#999" /><text x="2" y="8" fontFamily={UI} fontSize="6" fontWeight="700" fill="#888" stroke="none">Abc</text><path d="M8 9l4 4" stroke="#999" /></Ico>
            </Tool>
            <ToolRule />
            <TextTool $w={88}>
              <Ico w={14} h={15}><path d="M1 2h12v12H1z" fill="#e8b83c" stroke="#8a6a14" /><path d="M3 3h8" stroke="#555" strokeWidth="1.600" /></Ico>
              Clipboard<CaretDown />
            </TextTool>
            <TextTool $w={57}>&nbsp; [ Empty ]</TextTool>
            <ToolRule />
            <TextTool $w={74}>
              <Ico w={14} h={14}><path d="M1 5l6-4 6 4v6l-6 3-6-3z" fill="#fff" /><path d="M1 6l6 2v6l-6-3z" fill="#0d0" /><path d="M7 8l6-3M7 3v3M5 5h4" /></Ico>
              Extend<CaretDown />
            </TextTool>
            <TextTool $w={86}>
              <Ico w={14} h={14}><path d="M7 10Q3 6 3 4a4 4 0 0 1 8 0q0 2-4 6z" fill="#d9a520" stroke="none" /><circle cx="7" cy="4" r="1.500" fill="#fff" stroke="none" /><path d="M4 10l-3 3h12l-3-3" /></Ico>
              Select By<CaretDown />
            </TextTool>
            <TextTool $w={72}>
              <Ico w={14} h={14}><path d="M0 7h4M3 4l2 3-2 3" stroke={GOLD} strokeWidth="1.600" /><path d="M5 4l2-2h6v8l-2 3H5z" fill="#0d0" stroke="#163" /><path d="M5 4h6v8M11 4l2-2" stroke="#163" /></Ico>
              Convert<CaretDown />
            </TextTool>
            <Overflow aria-label="More"><CaretDown $c="#1e1e1e" /></Overflow>
          </Bar>

          <Viewport>
            <MeshScene />
            <Legend>
              <b>Mesh</b>
              <div>10/11/2022 9:23 AM</div>
              <LegendTitle>Edge/Face Connectivity</LegendTitle>
              <LegendRow $c="#0000ff">Free</LegendRow>
              <LegendRow $c="#ff0000">Single</LegendRow>
              <LegendRow $c="#000000">Double</LegendRow>
              <LegendRow $c="#d800d8">Triple</LegendRow>
              <LegendRow $c="#ffff00">Multiple</LegendRow>
            </Legend>
            <Brand>
              <BrandName>
                <svg width="33" height="27" fill="#fff"><path d="M0 27L12 0h8L8 27zM16 8l4-7 13 26h-9z" /></svg>
                nsys
              </BrandName>
              <BrandRelease>2022 R1</BrandRelease>
            </Brand>
            <Triad width="126" height="140">
              <defs>
                <linearGradient id="gx"><stop offset="0" stopColor="#004c00" /><stop offset=".5" stopColor="#00a000" /><stop offset="1" stopColor="#006400" /></linearGradient>
                <linearGradient id="rx" x2="0" y2="1"><stop offset="0" stopColor="#e00000" /><stop offset="1" stopColor="#6c0000" /></linearGradient>
                <radialGradient id="cy" cx=".4" cy=".35"><stop offset="0" stopColor="#10e0e0" /><stop offset="1" stopColor="#008a8a" /></radialGradient>
                <linearGradient id="bl"><stop offset=".3" stopColor="#000070" /><stop offset="1" stopColor="#0000f0" /></linearGradient>
              </defs>
              <path d="M16 48h6v62h-6zM10 50l9-20 9 20z" fill="url(#gx)" />
              <path d="M27 114h58v6H27zM85 108l21 9-21 9z" fill="url(#rx)" />
              <circle cx="19" cy="117" r="9" fill="url(#bl)" />
              <circle cx="60" cy="77" r="9" fill="url(#cy)" />
              <g fontFamily={UI} fontSize="12">
                <text x="18" y="17" fill="#00a000">Y</text>
                <text x="119" y="118" fill="#f01010">X</text>
              </g>
            </Triad>
          </Viewport>

          <Bar $h={4} />
          <Panel $h={122}>
            <PanelHead title="Messages" edge={1} />
            <GridArea>
              <Grid $w={1040}>
                <colgroup><col width="50" /><col width="465" /><col width="305" /><col width="220" /></colgroup>
                <thead><tr><th /><th>Text</th><th>Association</th><th>Timestamp</th></tr></thead>
                <tbody>
                  <tr>
                    <th>Info</th>
                    <td>4 overlapping contact regions found, please choose "Go To Objects" to find the problematic</td>
                    <td>{'Project>Model>Connections>Contacts>Contact Region 7'}</td>
                    <td>Thursday, November 10, 2022 9:21:58 AM</td>
                  </tr>
                </tbody>
              </Grid>
            </GridArea>
            <Grey />
          </Panel>
          <Bar $h={4} />
          <Panel $h={138}>
            <PanelHead title="Selection Information" max={false} edge={1} />
            <SelBar $h={27}>
              <Grip />
              <label htmlFor="cs">Coordinate System:</label>
              <Drop $w={152} id="cs"><option>Global Coordinate System</option></Drop>
              <SelTool aria-label="Options"><CheckBoxIco /></SelTool>
              <Drop $w={180} aria-label="Show"><option>Show Individual and Summary</option></Drop>
              <Overflow aria-label="More"><CaretDown $c="#1e1e1e" /></Overflow>
            </SelBar>
            <GridArea>
              <Grid $w={799}>
                <tbody><tr><th>No Selection</th></tr></tbody>
              </Grid>
            </GridArea>
            <Grey />
          </Panel>
        </Right>
      </Main>

      <Status>
        <StatusItem $w={80}>
          <Ico w={16} h={16}>
            <path d="M0 6h15v8H6l-3 3v-3H0z" fill="#f5d060" stroke="#b08820" strokeWidth="1" /><circle cx="9" cy="5" r="5" fill="#1a1ad0" stroke="#fff" strokeWidth="1" /><path d="M9 2v1M9 4v4" stroke="#fff" strokeWidth="1.600" />
          </Ico>
          1 Message
        </StatusItem>
        <StatusItem $w={79}>No Selection</StatusItem>
        <StatusItem $w={176}>
          <svg width="8" height="5"><path d="M0 5h8L4 0z" fill="#fff" /></svg>Metric (mm, kg, N, s, mV, mA)
        </StatusItem>
        <StatusItem $w={46}>Degrees</StatusItem>
        <StatusItem $w={28}>RPM</StatusItem>
        <StatusItem $w={39}>Celsius</StatusItem>
      </Status>
      <TaskEdge />
    </Page>
  );
}
